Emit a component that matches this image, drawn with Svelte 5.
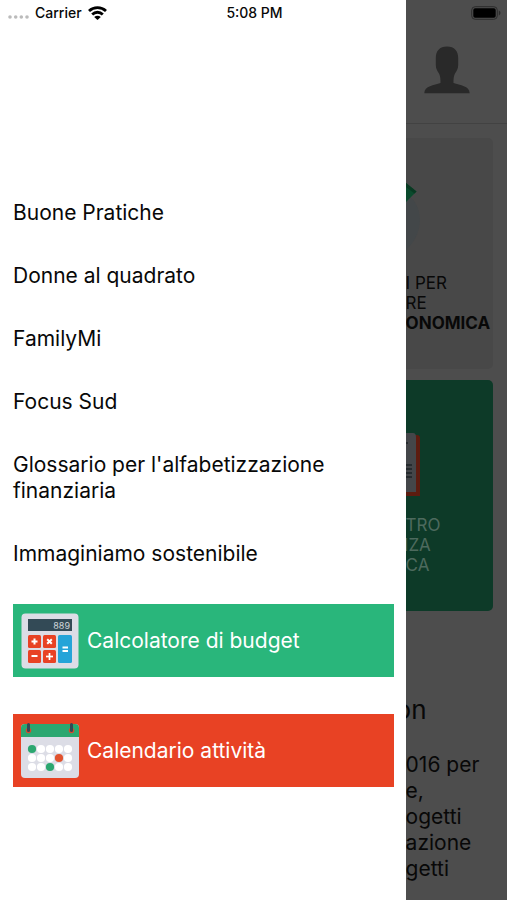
<script lang="ts">
    const links = [
        "Buone Pratiche",
        "Donne al quadrato",
        "FamilyMi",
        "Focus Sud",
        "Glossario per l'alfabetizzazione finanziaria",
        "Immaginiamo sostenibile",
    ];

    const keys = [
        { x: 7, y: 22 },
        { x: 22, y: 22 },
        { x: 7, y: 37 },
        { x: 22, y: 37 },
    ];

    const rows = [0, 1, 2];
    const cols = [0, 1, 2, 3, 4];

    function dotColor(row: number, col: number) {
        if ((row === 0 && col === 0) || (row === 2 && col === 2)) return "#2ba770";
        if (row === 1 && col === 3) return "#e1532f";
        return "#fff";
    }
</script>

<div class="screen">
    <header class="status">
        <div class="carrier">
            <svg width="21" height="14" viewBox="0 0 21 14" fill="#bbb">
                <circle cx="2" cy="11" r="1.8" />
                <circle cx="7.7" cy="11" r="1.8" />
                <circle cx="13.3" cy="11" r="1.8" />
                <circle cx="19" cy="11" r="1.8" />
            </svg>
            <span>Carrier</span>
            <svg width="19" height="14" viewBox="0 0 19 14" fill="none" stroke="#000" stroke-width="2.8">
                <path d="M1 5 C5.8 0.5 13.2 0.5 18 5" />
                <path d="M4.2 8.4 C7.2 5.5 11.8 5.5 14.8 8.4" />
                <path d="M9.5 14 L6.2 10.9 C8.2 9.2 10.8 9.2 12.8 10.9 Z" fill="#000" stroke="none" />
            </svg>
        </div>
        <span>5:08 PM</span>
        <svg class="battery" width="30" height="14" viewBox="0 0 30 14">
            <rect x="0.7" y="0.7" width="25.6" height="12.6" rx="3.5" fill="none" stroke="#2c2c2c" stroke-width="1" />
            <rect x="2.3" y="2.3" width="22.4" height="9.4" rx="1.8" fill="#000" />
            <path d="M27.8 4.6 C30 5.4 30 8.6 27.8 9.4 Z" fill="#2c2c2c" />
        </svg>
    </header>

    <nav class="drawer">
        {#each links as link}
            <a href="#menu">{link}</a>
        {/each}

        <button class="tool budget">
            <svg width="58" height="56" viewBox="0 0 58 56">
                <rect x="0.5" y="0.5" width="57" height="55" rx="4" fill="#dcdde6" />
                <rect x="7" y="6" width="44" height="12" fill="#334a56" />
                <text x="49" y="15.5" text-anchor="end" font-size="9" fill="#cfd6da">889</text>
                {#each keys as key}
                    <rect x={key.x} y={key.y} width="13" height="13" rx="1.5" fill="#e84224" />
                {/each}
                <rect x="37" y="22" width="14" height="28" rx="1.5" fill="#25a4d8" />
                <g stroke="#fff" stroke-width="2" fill="none">
                    <path d="M10.5 28.5 H16.5 M13.5 25.5 V31.5" />
                    <path d="M26.2 26.2 L30.8 30.8 M30.8 26.2 L26.2 30.8" />
                    <path d="M10.5 43 H16.5" />
                    <path d="M25 43.5 H32" stroke-width="1.7" />
                    <path d="M28.5 40 V47" stroke-width="1.7" />
                    <path d="M41.5 34.5 H47 M41.5 38 H47" />
                </g>
            </svg>
            <span>Calcolatore di budget</span>
        </button>

        <button class="tool calendar">
            <svg width="58" height="56" viewBox="0 0 58 56">
                <rect y="1" width="58" height="54" rx="4" fill="#dcdde6" />
                <path d="M0 14 V5 Q0 1 4 1 H54 Q58 1 58 5 V14 Z" fill="#2ba770" />
                <circle cx="7.5" cy="7.5" r="2.7" fill="#d84a2e" />
                <circle cx="50.5" cy="7.5" r="2.7" fill="#d84a2e" />
                <path d="M7.5 1.5 V7.5 M50.5 1.5 V7.5" stroke="#334a56" stroke-width="3" stroke-linecap="round" />
                {#each rows as row}
                    {#each cols as col}
                        <circle cx={11 + col * 9} cy={26 + row * 9} r="4.1" fill={dotColor(row, col)} />
                    {/each}
                {/each}
            </svg>
            <span>Calendario attività</span>
        </button>
    </nav>

    <!-- the page behind the drawer, dimmed -->
    <main class="page">
        <div class="topbar">
            <svg width="46" height="48" viewBox="0 0 46 48" fill="#292929">
                <path d="M23 0.5 C15.5 0.5 11.8 5 11.8 12 V19 C11.8 23 13.5 25 15 27.5 C16.3 30 16.6 33 16.5 37 C10 39.5 0.5 39.5 0.3 47.3 H45.7 C45.5 39.5 36 39.5 29.5 37 C29.4 33 29.7 30 31 27.5 C32.5 25 34.2 23 34.2 19 V12 C34.2 5 30.5 0.5 23 0.5 Z" />
            </svg>
        </div>

        <div class="cards">
            <section class="card">
                <svg width="16" height="80" viewBox="0 0 16 80">
                    <path d="M0 16 C18 26 19 55 0 72 Z" fill="#434749" />
                    <path d="M0 5 L10.5 13.5 L0 24 Z" fill="#0b4a2d" />
                    <path d="M0 5 L10.5 13.5 L8.5 15.5 L0 9 Z" fill="#083a22" />
                </svg>
                <p>I PER<br />RE<br /><b>ONOMICA</b></p>
            </section>

            <section class="card green">
                <svg width="16" height="80" viewBox="0 0 16 80">
                    <path d="M0 15 H11 Q14 15 14 18 V76 H0 Z" fill="#5c1c10" />
                    <path d="M0 13 H7 Q10 13 10 17 V72 H0 Z" fill="#444649" />
                    <path d="M0 23 H2 M0 45 H6 M0 49 H6 M0 53 H6 M0 57 H6" stroke="#1d2326" stroke-width="1.5" />
                </svg>
                <p>TRO<br /><span class="cut">NZA</span><br />CA</p>
            </section>
        </div>

        <article>
            <h2><span class="cut">on</span></h2>
            <p>016 per<br />e,<br />ogetti<br />azione<br />getti</p>
        </article>
    </main>
</div>

<style>
    :global(body) {
        margin: 0;
        background: #4d4d4d;
    }

    .screen {
        position: relative;
        display: grid;
        grid-template-columns: 4fr 1fr;
        min-height: 100vh;
        font-family: Inter, "Liberation Sans", sans-serif;
        color: #080808;
    }

    /* status bar lies over both the drawer and the page */
    .status {
        position: absolute;
        top: 0;
        left: 0;
        right: 0;
        display: grid;
        grid-template-columns: 1fr auto 1fr;
        align-items: center;
        height: 25px;
        padding: 0 6px 0 8px;
        font-size: 14px;
        font-weight: 500;
    }

    .carrier {
        display: flex;
        align-items: center;
        gap: 6px;
    }

    .battery {
        justify-self: end;
    }

    .drawer {
        display: flex;
        flex-direction: column;
        gap: 37px;
        padding: 200px 12px 0 13px;
        background: #fff;
        font-size: 21px;
        line-height: 26px;
    }

    .drawer a {
        color: inherit;
        text-decoration: none;
    }

    .tool {
        display: flex;
        align-items: center;
        gap: 8px;
        height: 73px;
        padding: 0 8px;
        border: 0;
        color: #fff;
        font: inherit;
        text-align: left;
    }

    .budget {
        background: #29b67b;
    }

    .calendar {
        background: #e84224;
    }

    .page {
        min-width: 0;
        overflow: hidden;
        background: #4d4d4d;
        white-space: nowrap;
    }

    .topbar {
        box-sizing: border-box;
        height: 124px;
        padding: 46px 0 0 18px;
        border-bottom: 1px solid #424242;
    }

    .cards {
        display: flex;
        flex-direction: column;
        gap: 11px;
        padding: 14px 14px 0 0;
    }

    .card {
        display: flex;
        flex-direction: column;
        gap: 15px;
        padding: 40px 0 36px;
        border-radius: 0 5px 5px 0;
        background: #484848;
        font-size: 17px;
        line-height: 20px;
    }

    .green {
        background: #0d3a28;
        color: #4d6a5e;
    }

    p,
    h2 {
        margin: 0;
    }

    /* words that start under the drawer */
    .cut {
        margin-left: -10px;
    }

    article {
        display: flex;
        flex-direction: column;
        gap: 26px;
        padding-top: 83px;
        font-size: 21px;
        line-height: 26px;
    }

    h2 {
        font-size: 26px;
        font-weight: 400;
        line-height: 32px;
    }
</style>
